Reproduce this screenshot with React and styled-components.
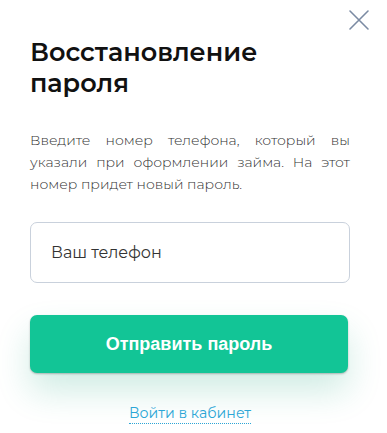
import React from "react"
import styled, { createGlobalStyle } from "styled-components"

const GlobalStyle = createGlobalStyle`
  html, body {
    margin: 0;
    padding: 0;
    background: #ffffff;
  }
  * {
    box-sizing: border-box;
  }
`

const Modal = styled.div`
  position: relative;
  width: 387px;
  height: 433px;
  padding: 36px 37px 0 30px;
  background: #ffffff;
  font-family: "Montserrat", "DejaVu Sans", sans-serif;
  overflow: hidden;
`

const CloseButton = styled.button`
  position: absolute;
  top: 9px;
  right: 17px;
  width: 22px;
  height: 22px;
  padding: 0;
  border: none;
  background: transparent;
  cursor: pointer;
  display: flex;
  align-items: center;
  justify-content: center;
`

const Title = styled.h2`
  margin: 0;
  font-size: 25.5px;
  line-height: 31px;
  font-weight: 600;
  color: #111111;
`

const Text = styled.p`
  margin: 31px 0 0;
  font-size: 14px;
  line-height: 22px;
  font-weight: 300;
  color: #333333;
  text-align: justify;
`

const Field = styled.input`
  display: block;
  width: 320px;
  height: 61px;
  margin-top: 27px;
  padding: 0 20px;
  border: 1px solid #c9d1dc;
  border-radius: 7px;
  font-family: "Montserrat", "DejaVu Sans", sans-serif;
  font-size: 16px;
  font-weight: 400;
  color: #222;
  outline: none;

  &::placeholder {
    color: #333333;
    opacity: 1;
  }
`

const SubmitButton = styled.button`
  display: block;
  width: 318px;
  height: 58px;
  margin-top: 32px;
  border: none;
  border-radius: 7px;
  background: #12c596;
  color: #ffffff;
  font-family: "Liberation Sans", Arial, sans-serif;
  font-size: 18px;
  font-weight: 700;
  box-shadow: 0 1px 2px rgba(0, 0, 0, 0.25), 0 18px 34px rgba(18, 160, 120, 0.2);
  cursor: pointer;
`

const Footer = styled.div`
  display: flex;
  justify-content: center;
  width: 320px;
  margin-top: 31px;
`

const LoginLink = styled.a`
  font-size: 14.2px;
  line-height: 18px;
  font-weight: 400;
  color: #2ba6d6;
  text-decoration: none;
  border-bottom: 1px dotted #2ba6d6;
  padding-bottom: 1px;
  cursor: pointer;
`

const CloseIcon = () => (
  <svg width="22" height="22" viewBox="0 0 22 22">
    <path d="M2 2 L20 20 M20 2 L2 20" stroke="#7b8ba3" strokeWidth="1.6" strokeLinecap="round" />
  </svg>
)

const App = () => {
  return (
    <>
      <GlobalStyle />
      <Modal>
        <CloseButton aria-label="Закрыть">
          <CloseIcon />
        </CloseButton>
        <Title>
          Восстановление
          <br />
          пароля
        </Title>
        <Text>
          Введите номер телефона, который вы указали при оформлении займа. На этот номер придет новый пароль.
        </Text>
        <Field type="tel" placeholder="Ваш телефон" />
        <SubmitButton>Отправить пароль</SubmitButton>
        <Footer>
          <LoginLink>Войти в кабинет</LoginLink>
        </Footer>
      </Modal>
    </>
  )
}

export default App
